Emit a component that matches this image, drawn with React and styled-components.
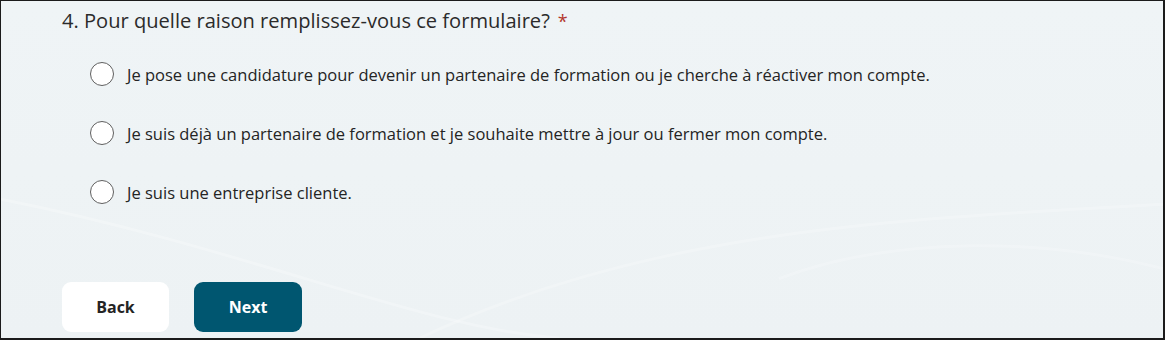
import React, { useState } from "react";
import styled, { createGlobalStyle } from "styled-components";

const GlobalStyle = createGlobalStyle`
  html, body {
    margin: 0;
    padding: 0;
    background: #eef3f5;
  }
  body {
    font-family: "Open Sans", "Noto Sans", sans-serif;
  }
`;

const Frame = styled.div`
  position: relative;
  box-sizing: border-box;
  width: 1165px;
  height: 340px;
  border-top: 1px solid #1b1b1b;
  border-left: 1px solid #1b1b1b;
  border-right: 2px solid #1b1b1b;
  border-bottom: 2px solid #1b1b1b;
  background: linear-gradient(180deg, #eff4f6 0%, #edf2f4 100%);
  overflow: hidden;
  display: flex;
  flex-direction: column;
  padding: 6px 0 0 61px;
`;

const Waves = styled.svg`
  position: absolute;
  inset: 0;
  width: 100%;
  height: 100%;
  pointer-events: none;
`;

const Content = styled.div`
  position: relative;
  display: flex;
  flex-direction: column;
  flex: 1;
`;

const Question = styled.h2`
  margin: 0;
  font-size: 20.1px;
  font-weight: 400;
  line-height: 28px;
  color: #2b2b2b;
`;

const Required = styled.span`
  color: #b3372c;
  font-size: 18px;
  margin-left: 8px;
`;

const Options = styled.div`
  display: flex;
  flex-direction: column;
  gap: 35px;
  margin: 27px 0 0 28px;
`;

const Option = styled.label`
  display: flex;
  align-items: center;
  gap: 13px;
  height: 24px;
  cursor: pointer;
  font-size: 16.5px;
  color: #242424;
`;

const Radio = styled.span`
  box-sizing: border-box;
  flex: none;
  width: 24px;
  height: 24px;
  border-radius: 50%;
  border: 1.5px solid #5f5f5f;
  background: #fff;
  display: flex;
  align-items: center;
  justify-content: center;
  &::after {
    content: "";
    width: 12px;
    height: 12px;
    border-radius: 50%;
    background: ${({ checked }) => (checked ? "#00566f" : "transparent")};
  }
`;

const Actions = styled.div`
  display: flex;
  gap: 25px;
  margin-top: auto;
  margin-bottom: 6px;
`;

const Button = styled.button`
  width: ${({ primary }) => (primary ? "108px" : "107px")};
  height: 50px;
  border: none;
  border-radius: 9px;
  font-family: inherit;
  font-size: 16px;
  font-weight: 700;
  cursor: pointer;
  background: ${({ primary }) => (primary ? "#005670" : "#ffffff")};
  color: ${({ primary }) => (primary ? "#ffffff" : "#242424")};
`;

const options = [
  "Je pose une candidature pour devenir un partenaire de formation ou je cherche à réactiver mon compte.",
  "Je suis déjà un partenaire de formation et je souhaite mettre à jour ou fermer mon compte.",
  "Je suis une entreprise cliente.",
];

export default function App() {
  const [selected, setSelected] = useState(null);

  return (
    <>
      <GlobalStyle />
      <Frame>
        <Waves viewBox="0 0 1165 340" preserveAspectRatio="none">
          <path
            d="M0 200 C 250 250, 420 330, 560 340"
            stroke="#ffffff"
            strokeOpacity="0.25"
            strokeWidth="3"
            fill="none"
          />
          <path
            d="M420 340 C 650 230, 900 220, 1165 205"
            stroke="#ffffff"
            strokeOpacity="0.22"
            strokeWidth="3"
            fill="none"
          />
          <path
            d="M780 280 C 900 235, 1050 240, 1165 270"
            stroke="#ffffff"
            strokeOpacity="0.2"
            strokeWidth="3"
            fill="none"
          />
        </Waves>
        <Content>
          <Question>
            4. Pour quelle raison remplissez-vous ce formulaire?
            <Required>*</Required>
          </Question>
          <Options>
            {options.map((text, i) => (
              <Option key={i} onClick={() => setSelected(i)}>
                <Radio checked={selected === i} />
                {text}
              </Option>
            ))}
          </Options>
          <Actions>
            <Button>Back</Button>
            <Button primary>Next</Button>
          </Actions>
        </Content>
      </Frame>
    </>
  );
}
